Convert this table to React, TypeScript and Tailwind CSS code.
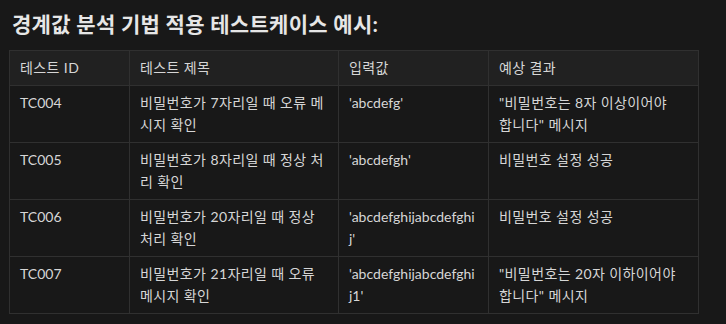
const rows = [
  {
    id: 'TC004',
    title: '비밀번호가 7자리일 때 오류 메시지 확인',
    input: "'abcdefg'",
    expected: '"비밀번호는 8자 이상이어야 합니다" 메시지',
  },
  {
    id: 'TC005',
    title: '비밀번호가 8자리일 때 정상 처리 확인',
    input: "'abcdefgh'",
    expected: '비밀번호 설정 성공',
  },
  {
    id: 'TC006',
    title: '비밀번호가 20자리일 때 정상 처리 확인',
    input: "'abcdefghijabcdefghij'",
    expected: '비밀번호 설정 성공',
  },
  {
    id: 'TC007',
    title: '비밀번호가 21자리일 때 오류 메시지 확인',
    input: "'abcdefghijabcdefghij1'",
    expected: '"비밀번호는 20자 이하이어야 합니다" 메시지',
  },
];

const cell = 'border border-[#303030] pl-[10px] py-[6px] align-top text-left font-normal';
// korean text in the reference runs a bit wider than Noto CJK
const ko = 'tracking-[0.4px]';

export default function App() {
  return (
    <div
      className="w-[726px] h-[324px] bg-[#181818] text-[#d6d6d6] px-[9px] pt-[10px] overflow-hidden"
      style={{ fontFamily: 'Lato, "Noto Sans CJK KR", sans-serif' }}
    >
      <h3 className="text-[21px] leading-[28px] font-bold tracking-[0.3px] text-[#e6e6e6] pl-[3px] mb-[12px]">
        경계값 분석 기법 적용 테스트케이스 예시:
      </h3>
      <table className="w-[689px] table-fixed border-collapse text-[14px] leading-[22px]">
        <colgroup>
          <col className="w-[120px]" />
          <col className="w-[209px]" />
          <col className="w-[150px]" />
          <col className="w-[210px]" />
        </colgroup>
        <thead>
          <tr className="bg-[#212121]">
            <th className={`${cell} pr-[10px] ${ko}`}>테스트 ID</th>
            <th className={`${cell} pr-[10px] ${ko}`}>테스트 제목</th>
            <th className={`${cell} pr-[10px] ${ko}`}>입력값</th>
            <th className={`${cell} pr-[10px] ${ko}`}>예상 결과</th>
          </tr>
        </thead>
        <tbody>
          {rows.map((r) => (
            <tr key={r.id}>
              <td className={`${cell} pr-[10px]`}>{r.id}</td>
              <td className={`${cell} pr-[10px] ${ko}`}>{r.title}</td>
              <td className={`${cell} pr-[10px] break-all`}>{r.input}</td>
              <td className={`${cell} pr-[15px] ${ko}`}>{r.expected}</td>
            </tr>
          ))}
        </tbody>
      </table>
    </div>
  );
}
